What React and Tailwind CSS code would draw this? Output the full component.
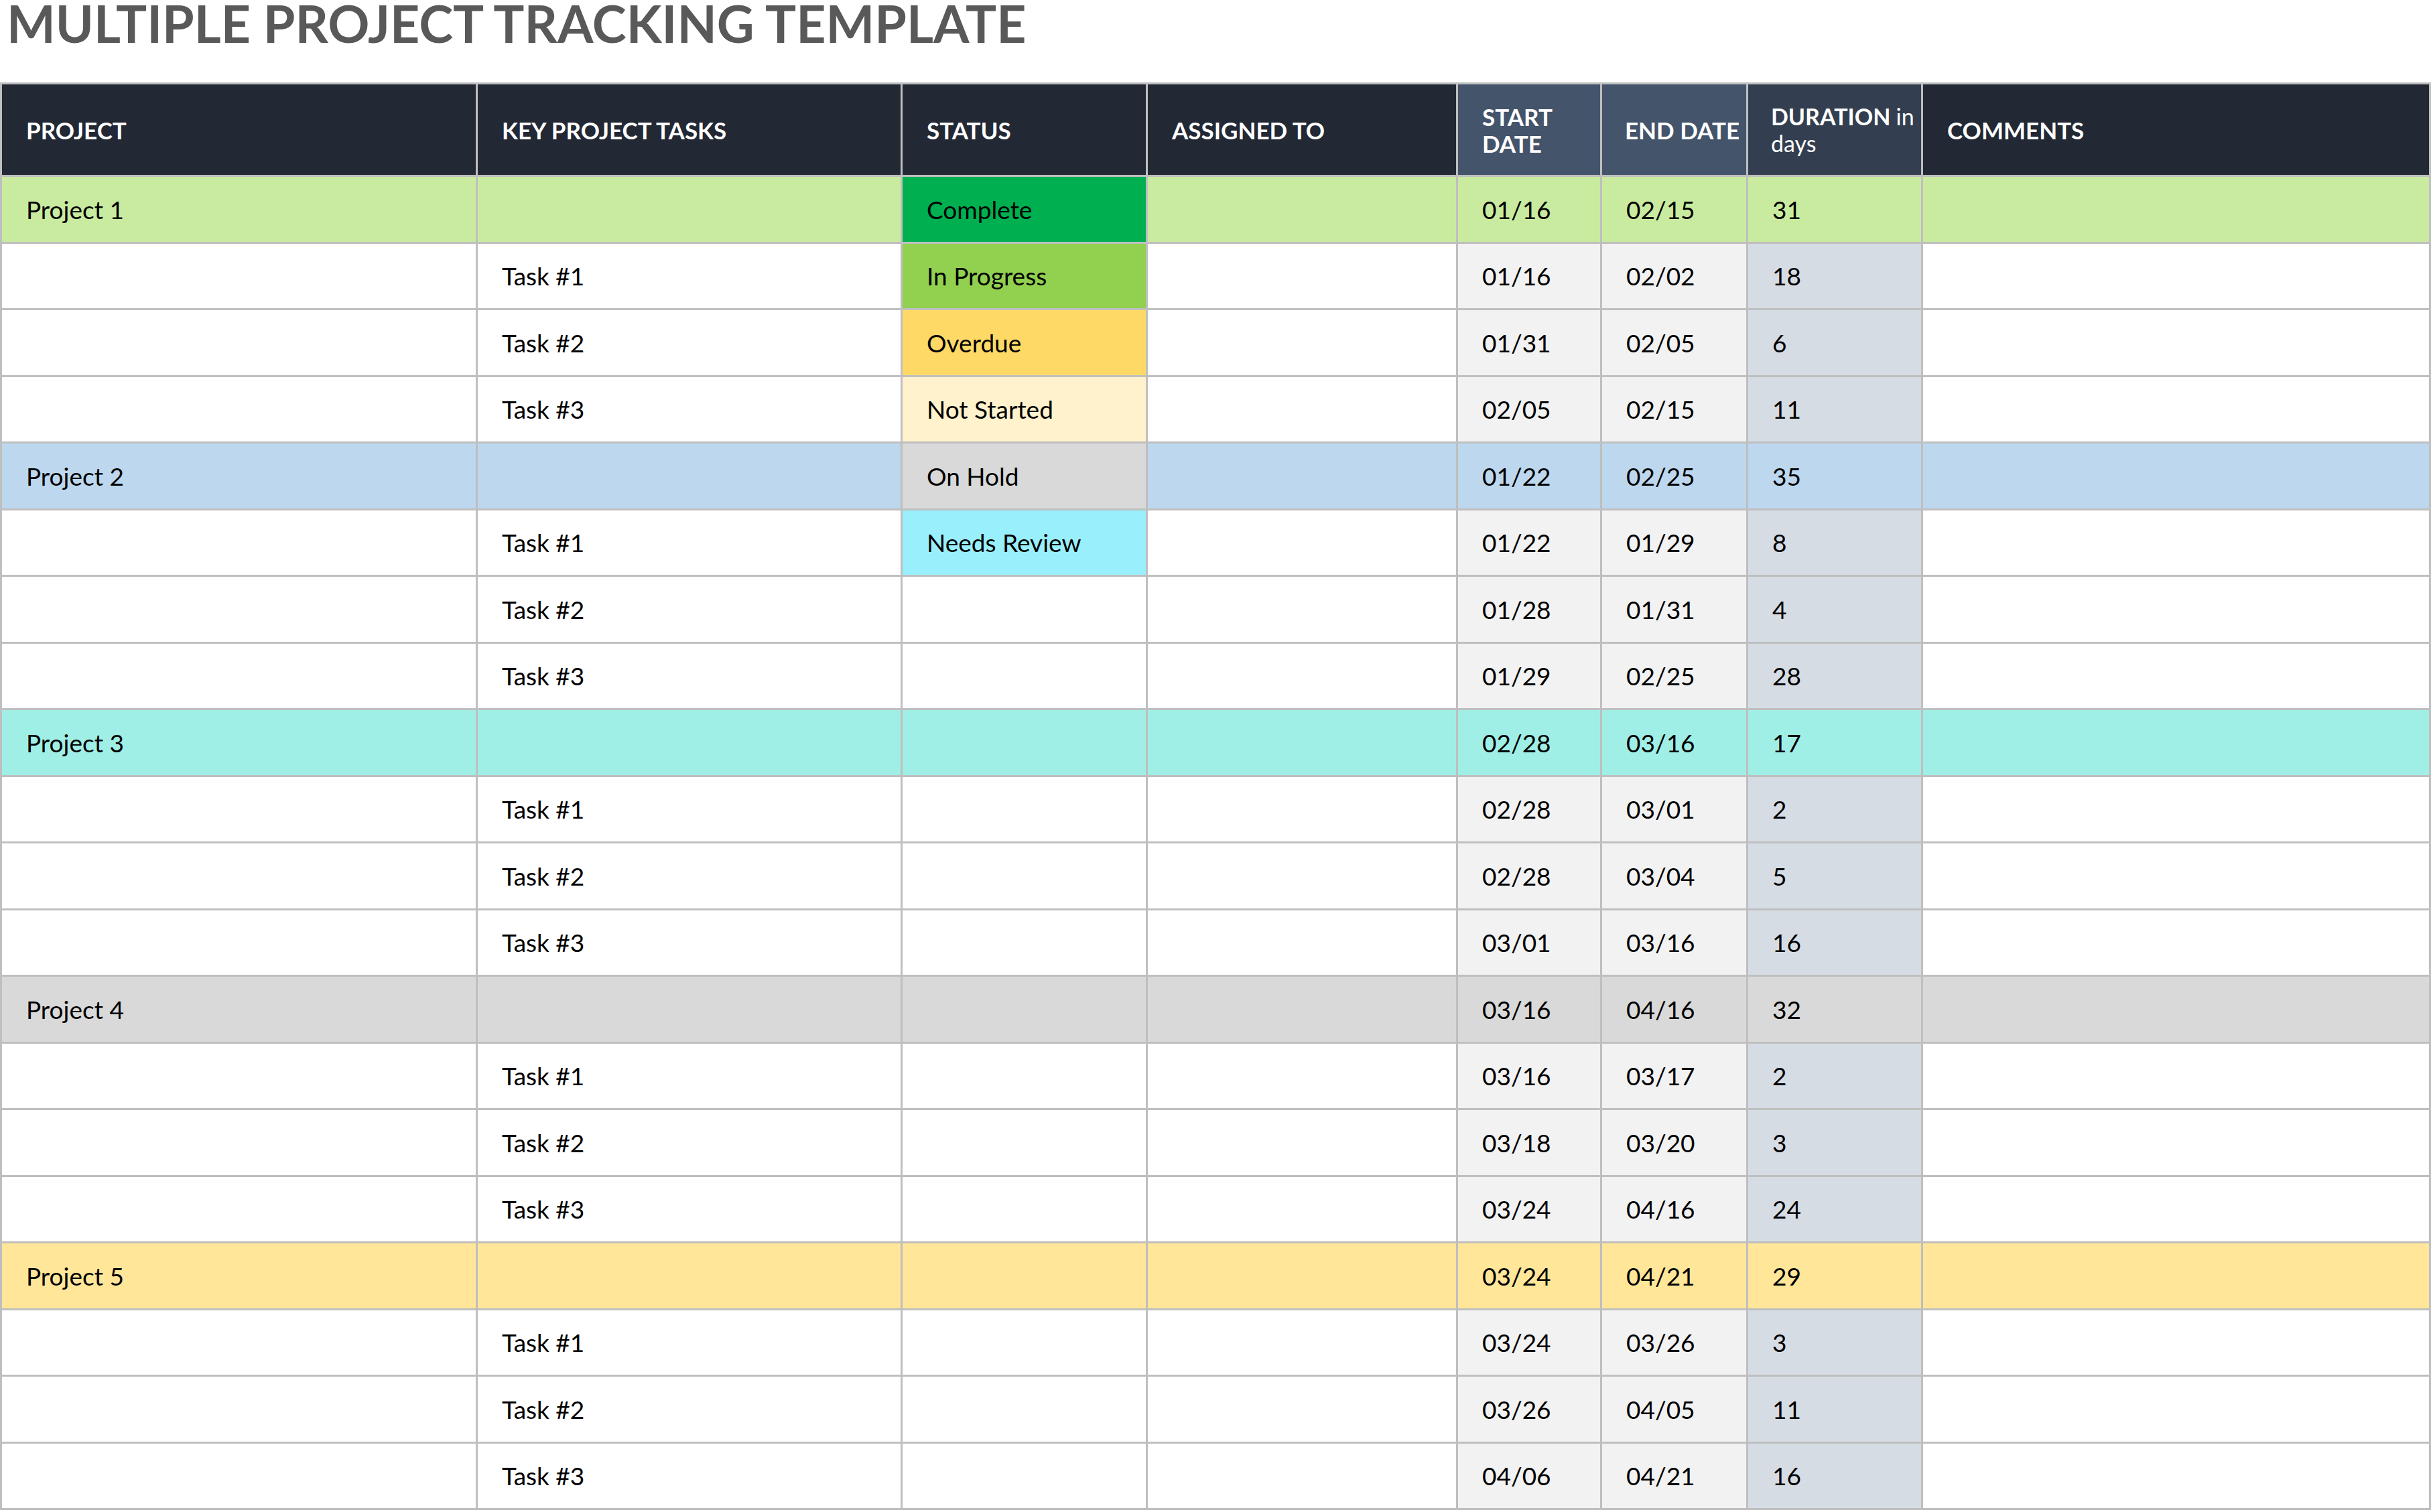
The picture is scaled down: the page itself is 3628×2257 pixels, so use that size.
const rows = [
  { p: "Project 1", s: "Complete", sd: "01/16", ed: "02/15", d: "31", bg: "bg-[#c9eba0]", sc: "bg-[#00b050]" },
  { t: "Task #1", s: "In Progress", sd: "01/16", ed: "02/02", d: "18", sc: "bg-[#92d050]" },
  { t: "Task #2", s: "Overdue", sd: "01/31", ed: "02/05", d: "6", sc: "bg-[#ffd966]" },
  { t: "Task #3", s: "Not Started", sd: "02/05", ed: "02/15", d: "11", sc: "bg-[#fff2cc]" },
  { p: "Project 2", s: "On Hold", sd: "01/22", ed: "02/25", d: "35", bg: "bg-[#bdd7ee]", sc: "bg-[#d9d9d9]" },
  { t: "Task #1", s: "Needs Review", sd: "01/22", ed: "01/29", d: "8", sc: "bg-[#99effc]" },
  { t: "Task #2", sd: "01/28", ed: "01/31", d: "4" },
  { t: "Task #3", sd: "01/29", ed: "02/25", d: "28" },
  { p: "Project 3", sd: "02/28", ed: "03/16", d: "17", bg: "bg-[#a0efe6]" },
  { t: "Task #1", sd: "02/28", ed: "03/01", d: "2" },
  { t: "Task #2", sd: "02/28", ed: "03/04", d: "5" },
  { t: "Task #3", sd: "03/01", ed: "03/16", d: "16" },
  { p: "Project 4", sd: "03/16", ed: "04/16", d: "32", bg: "bg-[#d9d9d9]" },
  { t: "Task #1", sd: "03/16", ed: "03/17", d: "2" },
  { t: "Task #2", sd: "03/18", ed: "03/20", d: "3" },
  { t: "Task #3", sd: "03/24", ed: "04/16", d: "24" },
  { p: "Project 5", sd: "03/24", ed: "04/21", d: "29", bg: "bg-[#ffe699]" },
  { t: "Task #1", sd: "03/24", ed: "03/26", d: "3" },
  { t: "Task #2", sd: "03/26", ed: "04/05", d: "11" },
  { t: "Task #3", sd: "04/06", ed: "04/21", d: "16" },
];

const td = "border-[3px] border-[#bfbfbf] px-[36px] align-middle";

export default function App() {
  return (
    <div className="w-[3628px] h-[2257px] bg-white text-black" style={{ fontFamily: "Lato, 'Open Sans', sans-serif" }}>
      <div className="h-[123px] pl-[10px] pt-[4px]">
        <div className="text-[77px] leading-[60px] font-bold text-[#595959] whitespace-nowrap">MULTIPLE PROJECT TRACKING TEMPLATE</div>
      </div>
      <table className="border-collapse table-fixed w-[3625px] text-[37px]">
        <colgroup>
          <col className="w-[710px]" /><col className="w-[634px]" /><col className="w-[366px]" /><col className="w-[463px]" />
          <col className="w-[215px]" /><col className="w-[218px]" /><col className="w-[261px]" /><col className="w-[758px]" />
        </colgroup>
        <thead>
          <tr className="h-[138px] text-white font-bold text-left leading-[40px] text-[35px]">
            <th className={`${td} bg-[#222834]`}>PROJECT</th>
            <th className={`${td} bg-[#222834]`}>KEY PROJECT TASKS</th>
            <th className={`${td} bg-[#222834]`}>STATUS</th>
            <th className={`${td} bg-[#222834]`}>ASSIGNED TO</th>
            <th className={`${td} bg-[#44546a]`}>START DATE</th>
            <th className={`${td} bg-[#44546a] whitespace-nowrap !px-[34px]`}>END DATE</th>
            <th className={`${td} bg-[#333f50] !pl-[34px] !pr-0 text-[34px]`}>DURATION <span className="font-normal">in days</span></th>
            <th className={`${td} bg-[#222834]`}>COMMENTS</th>
          </tr>
        </thead>
        <tbody>
          {rows.map((r, i) => {
            const rb = r.bg || "bg-white";
            return (
              <tr key={i} className={`h-[99.5px] ${rb}`}>
                <td className={td}>{r.p || ""}</td>
                <td className={td}>{r.t || ""}</td>
                <td className={`${td} ${r.sc || ""}`}>{r.s || ""}</td>
                <td className={td}></td>
                <td className={`${td} ${r.bg ? "" : "bg-[#f2f2f2]"}`}>{r.sd}</td>
                <td className={`${td} ${r.bg ? "" : "bg-[#f2f2f2]"}`}>{r.ed}</td>
                <td className={`${td} ${r.bg ? "" : "bg-[#d6dce4]"}`}>{r.d}</td>
                <td className={td}></td>
              </tr>
            );
          })}
        </tbody>
      </table>
    </div>
  );
}
